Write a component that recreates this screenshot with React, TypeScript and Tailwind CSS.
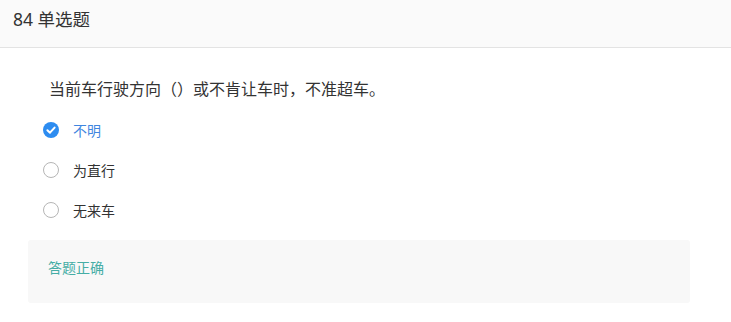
import React from "react";

const font = { fontFamily: '"Noto Sans", "Noto Sans CJK SC", sans-serif' };

function Radio({ checked }: { checked: boolean }) {
  if (checked) {
    return (
      <svg width="16" height="16" viewBox="0 0 16 16" className="shrink-0">
        <circle cx="8" cy="8" r="8" fill="#2d8cf0" />
        <path d="M4.4 8.2 L7 10.7 L11.6 5.6" fill="none" stroke="#fff" strokeWidth="2" strokeLinecap="round" strokeLinejoin="round" />
      </svg>
    );
  }
  return (
    <svg width="16" height="16" viewBox="0 0 16 16" className="shrink-0">
      <circle cx="8" cy="8" r="7.5" fill="#fff" stroke="#b5b5b5" strokeWidth="1" />
    </svg>
  );
}

export default function App() {
  const options = [
    { label: "不明", checked: true },
    { label: "为直行", checked: false },
    { label: "无来车", checked: false },
  ];
  return (
    <div className="w-[731px] h-[322px] bg-white overflow-hidden" style={font}>
      <div className="h-[48px] bg-[#fafafa] border-b border-[#e3e3e3] flex items-center pl-[13px] pb-[12px] pt-[4px]">
        <span className="text-[17.5px] text-[#333] leading-none">84 单选题</span>
      </div>
      <div className="pl-[49px] pt-[29px] text-[16px] text-[#333] leading-[24px]">
        当前车行驶方向<span className="inline-block w-[16px] text-right">（</span><span className="inline-block w-[16px] text-left">）</span>或不肯让车时，不准超车。
      </div>
      <div className="flex flex-col pl-[43px] pt-[19px] gap-[20px]">
        {options.map((o) => (
          <div key={o.label} className="flex items-center h-[20px] gap-[14px]">
            <Radio checked={o.checked} />
            <span className={"text-[14px] " + (o.checked ? "text-[#3f86e0]" : "text-[#333]")}>{o.label}</span>
          </div>
        ))}
      </div>
      <div className="ml-[28px] mt-[20px] w-[662px] h-[63px] bg-[#f8f8f8] rounded-[3px] flex items-center pl-[20px] pb-[9px]">
        <span className="text-[14px] text-[#45ada5]">答题正确</span>
      </div>
    </div>
  );
}
